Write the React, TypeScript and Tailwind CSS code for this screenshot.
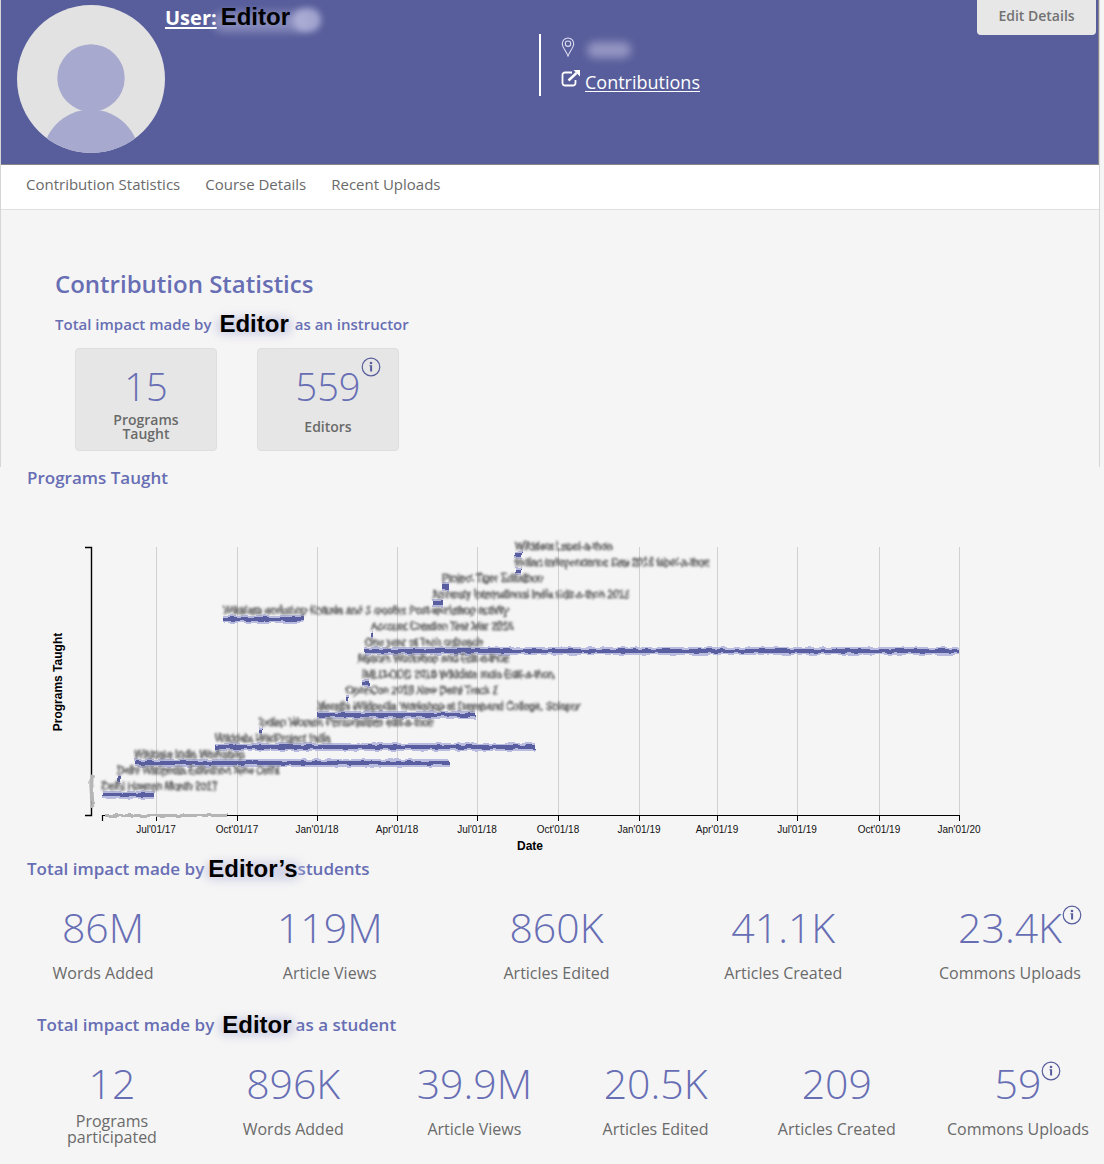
import React from "react";

type Stat = { value: string; label: string; info?: boolean };

const studentStats: Stat[] = [
  { value: "86M", label: "Words Added" },
  { value: "119M", label: "Article Views" },
  { value: "860K", label: "Articles Edited" },
  { value: "41.1K", label: "Articles Created" },
  { value: "23.4K", label: "Commons Uploads", info: true },
];

const asStudentStats: Stat[] = [
  { value: "12", label: "Programs participated" },
  { value: "896K", label: "Words Added" },
  { value: "39.9M", label: "Article Views" },
  { value: "20.5K", label: "Articles Edited" },
  { value: "209", label: "Articles Created" },
  { value: "59", label: "Commons Uploads", info: true },
];

const ticks = [
  { x: 156, label: "Jul'01/17" },
  { x: 237, label: "Oct'01/17" },
  { x: 317, label: "Jan'01/18" },
  { x: 397, label: "Apr'01/18" },
  { x: 477, label: "Jul'01/18" },
  { x: 558, label: "Oct'01/18" },
  { x: 639, label: "Jan'01/19" },
  { x: 717, label: "Apr'01/19" },
  { x: 797, label: "Jul'01/19" },
  { x: 879, label: "Oct'01/19" },
  { x: 959, label: "Jan'01/20" },
];

const programs = [
  { x: 515, y: 50, bar: 7, name: "Wikidata Label-a-thon" },
  { x: 515, y: 66, bar: 7, name: "Indian Independence Day 2018 label-a-thon" },
  { x: 442, y: 82, bar: 7, name: "Project Tiger Editathon" },
  { x: 432, y: 98, bar: 10, name: "Amnesty International India Edit-a-thon 2018" },
  { x: 223, y: 114, bar: 80, name: "Wikidata workshop Kolkata and 3 months Post-workshop activity" },
  { x: 371, y: 130, bar: 2, name: "Account Creation Test Mar 2018" },
  { x: 365, y: 146, bar: 594, name: "One year of Tech outreach" },
  { x: 358, y: 162, bar: 0, name: "Mysore Workshop and Edit-a-thon" },
  { x: 362, y: 178, bar: 8, name: "IMLD-ODD 2018 Wikidata India Edit-a-thon" },
  { x: 346, y: 194, bar: 2, name: "OpenCon 2018 New Delhi Track 2" },
  { x: 317, y: 210, bar: 159, name: "Marathi Wikipedia Workshop at Dayanand College, Solapur" },
  { x: 259, y: 226, bar: 3, name: "Indian Women Personalities edit-a-thon" },
  { x: 215, y: 242, bar: 321, name: "Wikidata WikiProject India" },
  { x: 134, y: 258, bar: 316, name: "Wikidata India Workshop" },
  { x: 117, y: 274, bar: 3, name: "Delhi Wikipedia Editathon New Delhi" },
  { x: 102, y: 290, bar: 53, name: "Delhi Howrah Month 2017" },
];

function InfoIcon() {
  return (
    <svg viewBox="0 0 20 20" className="h-5 w-5" fill="none" aria-hidden="true">
      <circle cx="10" cy="10" r="8.8" stroke="#585e9c" strokeWidth="1.2" />
      <circle cx="10" cy="6" r="1.3" fill="#585e9c" />
      <path d="M8.400 8.300h2.700v6.200h-2V9.300h-.7z" fill="#585e9c" />
    </svg>
  );
}

function EditorName({ suffix = "", className = "" }: { suffix?: string; className?: string }) {
  return (
    <span className={"relative inline-block font-['Liberation_Sans',sans-serif] text-2xl leading-6 font-bold text-black " + className}>
      <span className="absolute -inset-x-1 top-1 bottom-0 rounded-full bg-[#c9cae3] opacity-70 blur-[4px]" />
      <span className="relative">Editor{suffix}</span>
    </span>
  );
}

function StatItem({ stat }: { stat: Stat }) {
  return (
    <li className="flex w-36 flex-col items-center">
      <span className="relative text-[41px] leading-[48px] font-light text-[#676eb4]">
        {stat.value}
        {stat.info && (
          <button type="button" aria-label={"About " + stat.label} className="absolute top-0.5 left-full">
            <InfoIcon />
          </button>
        )}
      </span>
      <span className="mt-1 flex h-9 w-28 items-center justify-center text-center text-base leading-4 text-[#6a6a6a]">
        <span className={stat.label === "Programs participated" ? "" : "whitespace-nowrap"}>{stat.label}</span>
      </span>
    </li>
  );
}

function StatCard({ value, label, info }: Stat) {
  return (
    <div className="flex h-[103px] w-[142px] flex-col items-center rounded-sm border border-[#dedede] bg-[#e6e6e6] pt-3">
      <span className="relative text-[38px] leading-[50px] font-light text-[#676eb4]">
        {value}
        {info && (
          <button type="button" aria-label={"About " + label} className="absolute -top-1 left-full">
            <InfoIcon />
          </button>
        )}
      </span>
      <span className="flex h-8 w-20 items-center justify-center text-center text-sm leading-[14px] font-semibold text-[#6a6a6a]">{label}</span>
    </div>
  );
}

function ProgramsChart() {
  return (
    <svg viewBox="0 0 1104 359" className="block w-full font-['Liberation_Sans',sans-serif]" role="img" aria-label="Programs taught by date">
      <defs>
        <filter id="smudge" x="-5%" y="-50%" width="110%" height="200%" colorInterpolationFilters="sRGB">
          <feTurbulence type="fractalNoise" baseFrequency="0.25" numOctaves="1" seed="5" />
          <feDisplacementMap in="SourceGraphic" scale="4" xChannelSelector="R" yChannelSelector="G" />
          <feGaussianBlur stdDeviation="0.9" />
        </filter>
        <filter id="rough" filterUnits="userSpaceOnUse" x="80" y="30" width="900" height="300" colorInterpolationFilters="sRGB">
          <feTurbulence type="fractalNoise" baseFrequency="0.15" numOctaves="1" seed="3" />
          <feDisplacementMap in="SourceGraphic" scale="5" xChannelSelector="R" yChannelSelector="G" />
          <feGaussianBlur stdDeviation="0.6" />
        </filter>
      </defs>
      {ticks.map((t) => (
        <g key={t.label}>
          <path d={`M${t.x + 0.5} 47V315`} stroke="#d0d0d0" />
          <path d={`M${t.x + 0.5} 315v6`} stroke="#000" />
          <text x={t.x} y="333" fontSize="10" textAnchor="middle" fill="#111">{t.label}</text>
        </g>
      ))}
      <path d="M85 47.500h6.500v268H85" fill="none" stroke="#000" strokeWidth="1.4" />
      <path d="M102.500 321v-5.500H960" fill="none" stroke="#000" strokeWidth="1.2" />
      <path d="M105 315.500H228" stroke="#b5b5b5" strokeWidth="3" filter="url(#rough)" />
      <path d="M92 275c-2 8 1 25 0 33" fill="none" stroke="#b5b5b5" strokeWidth="4" filter="url(#rough)" />
      {programs.map((p) => (
        <g key={p.y}>
          {p.bar > 0 && (
            <g filter="url(#rough)">
              <rect x={p.x} y={p.y + 1} width={p.bar} height="8" fill="#b9bbdf" />
              <rect x={p.x} y={p.y + 3} width={p.bar} height="4" fill="#585e9f" />
            </g>
          )}
          <text x={p.x} y={p.y} fontSize="10" fill="#444" stroke="#777" strokeWidth="0.8" filter="url(#smudge)">{p.name}</text>
        </g>
      ))}
      <text transform="translate(62 182) rotate(-90)" textAnchor="middle" fontSize="12" fontWeight="700">Programs Taught</text>
      <text x="530" y="350" textAnchor="middle" fontSize="12" fontWeight="700">Date</text>
    </svg>
  );
}

export default function App() {
  return (
    <div className="min-h-screen overflow-x-hidden bg-[#f5f5f5] pb-3 font-['Open_Sans',sans-serif] text-[#6a6a6a]">
      <div className="mr-1 border-x border-[#d6d6d6]">
        <header className="flex h-[165px] items-start border-r border-b border-[#85858a] bg-[#585e9b] pr-0.5 pl-4">
          <svg viewBox="0 0 148 148" className="mt-[5px] h-[148px] w-[148px] shrink-0" role="img" aria-label="User avatar">
            <clipPath id="avatar"><circle cx="74" cy="74" r="74" /></clipPath>
            <g clipPath="url(#avatar)">
              <rect width="148" height="148" fill="#e2e2e2" />
              <circle cx="74" cy="73" r="33.7" fill="#a7a9cf" />
              <circle cx="74" cy="153" r="48.5" fill="#a7a9cf" />
            </g>
          </svg>
          <h1 className="relative mt-1 w-[374px] text-xl leading-7 font-bold text-white">
            <span className="absolute top-2 left-12 h-5 w-24 rounded-full bg-[#b5b6dc] opacity-50 blur-[4px]" />
            <span className="absolute top-1 left-32 h-6 w-7 rounded-full bg-[#b5b6dc] opacity-80 blur-[3px]" />
            <span className="relative underline underline-offset-2">User:</span>
            <span className="relative ml-1 font-['Liberation_Sans',sans-serif] text-2xl leading-6 text-black">Editor</span>
          </h1>
          <div className="mt-[34px] flex h-[62px] flex-col border-l-2 border-white pl-5 text-white">
            <div className="flex h-[34px] shrink-0 items-start">
              <svg viewBox="0 0 14 20" className="mt-[3px] h-5 w-3.5" fill="none" stroke="#dcdcf0" strokeWidth="1.1" aria-hidden="true">
                <path d="M7 19C5.500 14.500 1.300 10.500 1.300 6.700a5.700 5.700 0 0 1 11.400 0C12.700 10.500 8.500 14.500 7 19z" />
                <circle cx="7" cy="6.700" r="2.700" />
              </svg>
              <span className="mt-2 ml-3 h-4 w-11 rounded-full bg-[#a3a3cc] opacity-80 blur-[4px]" />
            </div>
            <div className="flex h-7 items-start">
              <svg viewBox="0 0 20 18" className="mt-0.5 h-[18px] w-5" fill="none" stroke="#fff" strokeWidth="1.8" aria-hidden="true">
                <path d="M11 2.500H4a2.500 2.500 0 0 0-2.500 2.500v8A2.500 2.500 0 0 0 4 15.500h8a2.500 2.500 0 0 0 2.500-2.500V10" />
                <path d="M7.500 10.500 15.500 3" strokeWidth="2.400" />
                <path d="M12.500 0H19v6.500z" fill="#fff" stroke="none" />
              </svg>
              <a href="#contributions" className="ml-1 text-lg leading-7 underline underline-offset-2">Contributions</a>
            </div>
          </div>
          <button type="button" className="ml-auto h-[35px] w-[119px] rounded-b-sm bg-[#e7e7e7] pb-1 text-sm font-semibold text-[#727272]">Edit Details</button>
        </header>
        <nav className="flex h-[45px] gap-[25px] border-b border-[#e0e0e0] bg-white pt-[7px] pl-[25px] text-[15px] leading-6">
          <a href="#statistics">Contribution Statistics</a>
          <a href="#courses">Course Details</a>
          <a href="#uploads">Recent Uploads</a>
        </nav>
        <section id="statistics" className="h-[257px] pt-14 pl-[54px] text-[#676eb4]">
          <h2 className="text-2xl leading-9 font-semibold">Contribution Statistics</h2>
          <h3 className="mt-2 flex h-7 items-center text-[15px] font-semibold">
            Total impact made by
            <EditorName className="mr-1.5 ml-2" />
            as an instructor
          </h3>
          <div className="mt-2.5 ml-5 flex gap-10">
            <StatCard value="15" label="Programs Taught" />
            <StatCard value="559" label="Editors" info />
          </div>
        </section>
      </div>
      <section>
        <h3 className="h-[33px] pl-[27px] text-[17px] leading-[22px] font-semibold text-[#676eb4]">Programs Taught</h3>
        <ProgramsChart />
      </section>
      <section>
        <h3 className="flex h-5 items-center pl-[27px] text-[17px] font-semibold text-[#676eb4]">
          Total impact made by
          <EditorName suffix="’s" className="ml-1" />
          students
        </h3>
        <ul className="mt-6 flex justify-between pr-[22px] pl-[31px]">
          {studentStats.map((s) => <StatItem key={s.label} stat={s} />)}
        </ul>
      </section>
      <section className="mt-6">
        <h3 className="flex h-5 items-center pl-[37px] text-[17px] font-semibold text-[#676eb4]">
          Total impact made by
          <EditorName className="mr-1 ml-2" />
          as a student
        </h3>
        <ul className="mt-6 flex justify-between pr-3.5 pl-10">
          {asStudentStats.map((s) => <StatItem key={s.label} stat={s} />)}
        </ul>
      </section>
    </div>
  );
}
